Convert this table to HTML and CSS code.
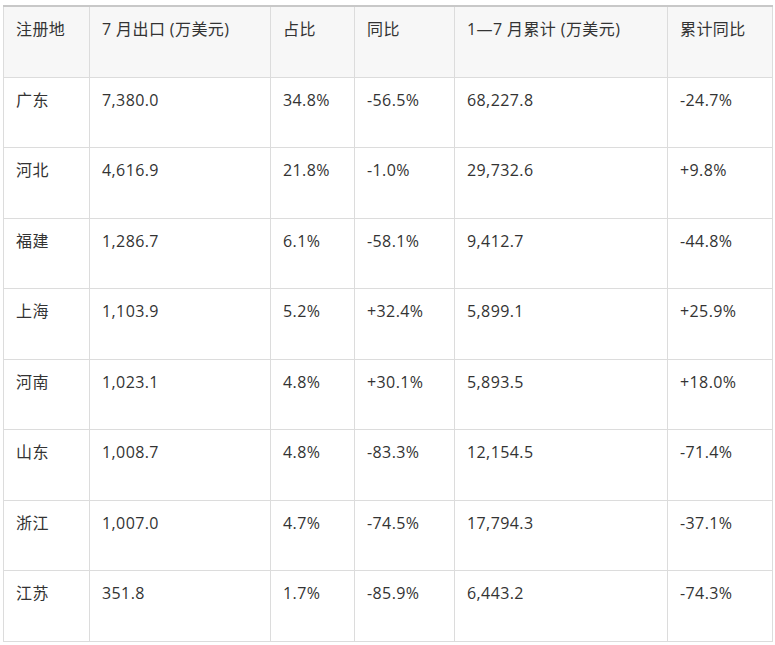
FILE: index.html
```html
<!DOCTYPE html>
<html lang="zh">
<head>
<meta charset="utf-8">
<link rel="stylesheet" href="styles.css">
</head>
<body>
<table class="data">
  <colgroup>
    <col class="c1"><col class="c2"><col class="c3"><col class="c4"><col class="c5"><col class="c6">
  </colgroup>
  <thead>
    <tr><th>注册地</th><th>7 月出口 (万美元)</th><th>占比</th><th>同比</th><th>1—7 月累计 (万美元)</th><th>累计同比</th></tr>
  </thead>
  <tbody>
    <tr><td>广东</td><td>7,380.0</td><td>34.8%</td><td>-56.5%</td><td>68,227.8</td><td>-24.7%</td></tr>
    <tr><td>河北</td><td>4,616.9</td><td>21.8%</td><td>-1.0%</td><td>29,732.6</td><td>+9.8%</td></tr>
    <tr><td>福建</td><td>1,286.7</td><td>6.1%</td><td>-58.1%</td><td>9,412.7</td><td>-44.8%</td></tr>
    <tr><td>上海</td><td>1,103.9</td><td>5.2%</td><td>+32.4%</td><td>5,899.1</td><td>+25.9%</td></tr>
    <tr><td>河南</td><td>1,023.1</td><td>4.8%</td><td>+30.1%</td><td>5,893.5</td><td>+18.0%</td></tr>
    <tr><td>山东</td><td>1,008.7</td><td>4.8%</td><td>-83.3%</td><td>12,154.5</td><td>-71.4%</td></tr>
    <tr><td>浙江</td><td>1,007.0</td><td>4.7%</td><td>-74.5%</td><td>17,794.3</td><td>-37.1%</td></tr>
    <tr><td>江苏</td><td>351.8</td><td>1.7%</td><td>-85.9%</td><td>6,443.2</td><td>-74.3%</td></tr>
  </tbody>
</table>
</body>
</html>
```
FILE: styles.css
```css
html, body {
  margin: 0;
  padding: 0;
  background: #ffffff;
}
body {
  padding: 5px 0 0 3px;
}
.data {
  border-collapse: collapse;
  table-layout: fixed;
  width: 769px;
  font-family: "Open Sans", "Noto Sans CJK SC", sans-serif;
  font-size: 16px;
  letter-spacing: 0.4px;
  color: #333333;
  border-top: 2px solid #c8c8c8;
}
.c1 { width: 86px; }
.c2 { width: 181px; }
.c3 { width: 84px; }
.c4 { width: 100px; }
.c5 { width: 213px; }
.c6 { width: 105px; }
.data th, .data td {
  border: 1px solid #dcdcdc;
  text-align: left;
  vertical-align: top;
  font-weight: normal;
  padding: 12px 12px 0 12px;
  line-height: 20px;
  height: 57px;
}
.data th {
  height: 58px;
}
.data thead tr {
  background: #f7f7f7;
}
.data tr:nth-child(even) td {
  height: 58px;
}
```
